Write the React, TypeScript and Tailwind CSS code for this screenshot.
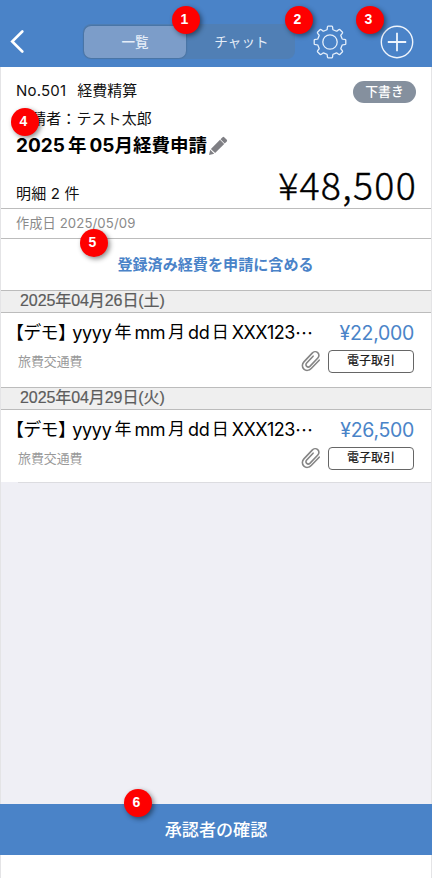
import type { ReactNode } from "react";
import { clsx } from "clsx";

type Expense = {
  date: string;
  amount: string;
};

const EXPENSES: Expense[] = [
  { date: "2025年04月26日(土)", amount: "¥22,000" },
  { date: "2025年04月29日(火)", amount: "¥26,500" },
];

function Marker({ n, className }: { n: number; className: string }) {
  return (
    <span
      className={clsx(
        "absolute z-10 flex size-7 items-center justify-center rounded-full bg-[#fe0000] pr-[3px] pb-px font-['Liberation_Sans','Noto_Sans_CJK_JP',sans-serif] text-[14px] font-bold text-white shadow-[2px_2px_5px_rgba(0,0,0,0.45)]",
        className,
      )}
    >
      {n}
    </span>
  );
}

function GearIcon() {
  // 8 teeth around a 12px body
  const teeth = Array.from({ length: 8 }, (_, i) => {
    const point = (r: number, deg: number) => {
      const a = ((i * 45 + deg - 90) * Math.PI) / 180;
      return `${(17 + r * Math.cos(a)).toFixed(2)} ${(17 + r * Math.sin(a)).toFixed(2)}`;
    };
    return `${i === 0 ? "M" : "L"}${point(12.6, -14)} Q${point(13.2, -11.5)} ${point(14.6, -10.5)} Q${point(15.8, -9.5)} ${point(15.9, -7)} L${point(15.9, 7)} Q${point(15.8, 9.5)} ${point(14.6, 10.5)} Q${point(13.2, 11.5)} ${point(12.6, 14)} Q${point(12.4, 22.5)} ${point(12.6, 31)}`;
  }).join(" ");
  return (
    <svg width="34" height="34" viewBox="0 0 34 34" fill="none" stroke="#e4eefa" strokeWidth="1.3" strokeLinejoin="round">
      <path d={`${teeth} Z`} />
      <circle cx="17" cy="17" r="7.2" />
    </svg>
  );
}

function PlusIcon() {
  return (
    <svg width="34" height="34" viewBox="0 0 34 34" fill="none" stroke="#eef4fc">
      <circle cx="17" cy="17" r="15.7" strokeWidth="1.4" />
      <path d="M17 7.800v18.400M7.800 17h18.400" strokeWidth="1.8" />
    </svg>
  );
}

function PencilIcon() {
  return (
    <svg width="20" height="20" viewBox="0 0 20 20" fill="#7f7f84">
      <path d="M1 19l1.200-5.200 4 3.900zM2.900 12.900L12 3.800l4.200 4.200-9.100 9.100zM12.500 3.300l2.100-2.100q.8-.7 1.600 0l2.600 2.600q.7.800 0 1.600l-2.100 2.100z" />
    </svg>
  );
}

function ClipIcon() {
  return (
    <svg width="20" height="22" viewBox="0 0 20 22" fill="none" stroke="#858585" strokeWidth="1.6" strokeLinecap="round">
      <path d="M18.200 10.200l-8 8.300c-2 2.100-5.200 2.500-7.300.6s-2-5.100 0-7.200l8.300-8.800c1.500-1.600 3.900-1.900 5.500-.5s1.600 3.800.1 5.400l-7.700 8.100c-1 1-2.400 1.200-3.400.3s-1-2.300 0-3.400l6.400-6.800" />
    </svg>
  );
}

function DateHeader({ children }: { children: ReactNode }) {
  return (
    <div className="flex h-[23px] items-center border-y border-[#bcbcbc] bg-[#efefef] pb-px pl-[19px] font-['Liberation_Sans','Noto_Sans_CJK_JP',sans-serif] text-[16px] tracking-[-0.08px] whitespace-nowrap text-[#5c5c5c] [-webkit-text-stroke:0.2px]">
      {children}
    </div>
  );
}

function ExpenseRow({ amount }: { amount: string }) {
  return (
    <div className="flex h-[74px] flex-col bg-white pt-1.5 pr-[17px]">
      <div className="flex h-[26px] items-center justify-between whitespace-nowrap">
        <span className="flex items-center gap-[3px] pl-[14px] text-[18px] text-black">
          <span className="tracking-[-0.7px] [font-feature-settings:'halt']">【デモ】</span>
          <span className="ml-[3px] tracking-[-0.3px]">yyyy</span>
          <span className="pt-px text-[17px]">年</span>
          <span className="tracking-[-0.5px]">mm</span>
          <span className="pt-px text-[17px]">月</span>
          <span className="tracking-[-0.2px]">dd</span>
          <span className="-ml-px pt-px text-[17px]">日</span>
          <span className="flex tracking-[-0.500px]">
            XXX123
            <span className="font-['Noto_Sans_CJK_JP',sans-serif]">…</span>
          </span>
        </span>
        <span className="pt-[3px] text-[19.500px] tracking-[-0.300px] text-[#4a84c8]">{amount}</span>
      </div>
      <div className="flex h-[32px] items-center">
        <span className="flex-1 pt-0.5 pl-[17px] text-[12.900px] text-[#999]">旅費交通費</span>
        <ClipIcon />
        <span className="ml-[7px] flex h-[23px] w-[86px] items-center justify-center rounded-[4px] border border-[#666] text-[12px] font-medium text-[#222]">
          電子取引
        </span>
      </div>
    </div>
  );
}

export default function App() {
  return (
    <div className="relative flex h-[878px] w-[432px] flex-col overflow-hidden bg-white font-['Inter','Noto_Sans_CJK_JP',sans-serif]">
      <header className="flex h-[67px] items-center bg-[#4a83c8] pt-4">
        <svg className="ml-2.5" width="14" height="23" viewBox="0 0 14 23" fill="none" stroke="#fff" strokeWidth="2.6" strokeLinecap="round">
          <path d="M12.300 1.500L2.200 11.500l10.100 10" />
        </svg>
        <div className="ml-[59px] flex h-[35px] w-[212px] items-center rounded-[8px] bg-[#507fb5] p-px text-[13.500px] text-[#e5edf8]">
          <span className="flex h-[32px] w-[102px] items-center justify-center rounded-[7px] bg-[#7c9dc9] pt-px font-medium shadow-[0_0_2px_rgba(0,0,0,0.3)]">
            一覧
          </span>
          <span className="flex-1 pt-px pl-[3px] text-center tracking-[0.2px]">チャット</span>
        </div>
        <div className="ml-[18px]">
          <GearIcon />
        </div>
        <div className="ml-[33px]">
          <PlusIcon />
        </div>
      </header>

      <main className="flex flex-1 flex-col border-x border-[#e4e4e6] bg-[#efeff5]">
        <section className="flex h-[142px] justify-between border-b border-[#bcbcbc] bg-white pr-[15px] pl-[15px] text-[15px] whitespace-nowrap text-[#111]">
          <div className="flex flex-col pt-[13px]">
            <p className="flex h-[22px] items-center gap-[11px]">
              <span className="tracking-[0.2px]">No.501</span>
              <span>経費精算</span>
            </p>
            <p className="mt-[6px] flex h-[22px] items-center tracking-[0.1px]">申請者：テスト太郎</p>
            <h1 className="mt-1 flex h-6 items-center text-[18.500px] font-bold text-black">
              <span className="text-[19px]">2025</span>
              <span className="mx-[3px]">年</span>
              <span className="text-[19px]">05</span>
              <span>月経費申請</span>
              <span className="ml-px">
                <PencilIcon />
              </span>
            </h1>
            <p className="mt-[25px] flex h-[22px] items-center tracking-[0.2px]">明細 2 件</p>
          </div>
          <div className="flex flex-col items-end">
            <span className="mt-[14px] flex h-6 w-[63px] items-center justify-center rounded-full bg-[#85909e] text-[12.800px] font-medium text-white">
              下書き
            </span>
            <span className="mt-[57px] -mr-px font-['Noto_Sans_CJK_JP',sans-serif] text-[37.500px] leading-[48px] font-light tracking-[1.300px] text-black [-webkit-text-stroke:0.4px]">
              ¥48,500
            </span>
          </div>
        </section>
        <p className="flex h-[30px] items-center border-b border-[#bcbcbc] bg-white pt-px pl-[15px] text-[13.200px] tracking-[0.100px] text-[#8a8a8a]">
          作成日 2025/05/09
        </p>
        <button className="flex h-[51px] items-center justify-center bg-white pt-px pr-px text-[15.100px] font-bold text-[#4a83c8]">
          登録済み経費を申請に含める
        </button>
        {EXPENSES.map((expense) => (
          <div key={expense.date}>
            <DateHeader>{expense.date}</DateHeader>
            <ExpenseRow amount={expense.amount} />
          </div>
        ))}
        <div className="-mt-0.5 h-0.5 bg-[#efeff5] pl-[17px]">
          <div className="h-px bg-[#dcdce0]" />
        </div>
      </main>

      <footer className="flex h-[74px] flex-col bg-white">
        <button className="flex h-[51px] items-center justify-center bg-[#4a83c8] text-[17.100px] font-medium text-white">
          承認者の確認
        </button>
        <div className="flex-1 border-x border-[#e4e4e6]" />
      </footer>

      <Marker n={1} className="top-[6px] left-[172px]" />
      <Marker n={2} className="top-[6px] left-[285px]" />
      <Marker n={3} className="top-[6px] left-[356px]" />
      <Marker n={4} className="top-[108px] left-[11px]" />
      <Marker n={5} className="top-[229px] left-[80px]" />
      <Marker n={6} className="top-[789px] left-[124px]" />
    </div>
  );
}
